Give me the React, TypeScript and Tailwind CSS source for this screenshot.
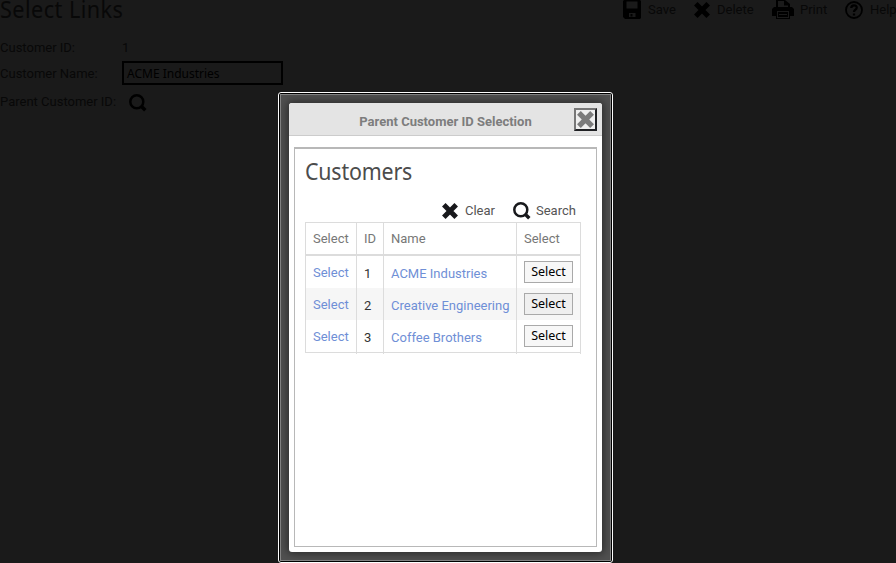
import type { ReactNode } from 'react';

function CrossIcon({ className }: { className: string }) {
  return (
    <svg viewBox="0 0 16 16" className={className} fill="none" stroke="currentColor" strokeWidth="5">
      <path d="M1.8 1.8 14.2 14.2M14.2 1.8 1.8 14.2" />
    </svg>
  );
}

function SearchIcon({ className }: { className: string }) {
  return (
    <svg viewBox="0 0 18 18" className={className} fill="none" stroke="currentColor">
      <circle cx="7.8" cy="7.8" r="6.5" strokeWidth="2.5" />
      <path d="m12 12 4.3 4.3" strokeWidth="3.4" />
    </svg>
  );
}

function SaveIcon() {
  return (
    <svg viewBox="0 0 18 19" className="h-[19px] w-[18px] shrink-0">
      <path
        fill="currentColor"
        fillRule="evenodd"
        d="M0 1 1 0h16l1 1v17l-1 1H2l-2-2ZM3.5 1.5v7h11v-7ZM6 13v4h6.5v-4ZM7.500 14H9.500v2.500H7.500Z"
      />
    </svg>
  );
}

function PrintIcon() {
  return (
    <svg viewBox="0 0 22 19" className="h-[19px] w-[22px] shrink-0">
      <path fill="currentColor" d="M4 0h9l5 4v3h2l2 2v7h-4v3H4v-3H0V9l2-2h2Z" />
      <path fill="#1a1a1a" d="M6 1h6v4.500h4V7H6ZM5 11h12v1H5ZM5 12h1v5H5ZM16 12h1v5h-1ZM5 17h12v1H5ZM7 14h8v1H7Z" />
    </svg>
  );
}

function HelpIcon() {
  return (
    <svg viewBox="0 0 18 18" className="h-[18px] w-[18px] shrink-0" fill="none" stroke="currentColor">
      <circle cx="9" cy="9" r="8" strokeWidth="1.8" />
      <path d="M6.3 7c0-3.6 5.6-3.4 5.4-.3C11.6 8.7 9 8.7 9 11M9 12.5v2" strokeWidth="2.3" />
    </svg>
  );
}

function Cell({ children, className }: { children: ReactNode; className: string }) {
  return <div className={`border-r border-[#dcdcdc] pl-[7px] ${className}`}>{children}</div>;
}

const customers = ['ACME Industries', 'Creative Engineering', 'Coffee Brothers'];

function CustomerTable() {
  return (
    <div className="w-[276px] border border-r-0 border-[#dcdcdc] text-[13px]">
      <div className="grid h-[33px] grid-cols-[51px_27px_133px_64px] border-b-2 border-[#dcdcdc] leading-[31px] text-[#777]">
        <Cell className="">Select</Cell>
        <Cell className="">ID</Cell>
        <Cell className="">Name</Cell>
        <Cell className="">Select</Cell>
      </div>
      {customers.map((name, i) => (
        <div
          key={name}
          className="grid h-8 grid-cols-[51px_27px_133px_64px] leading-8 text-[#6f8fd6] even:bg-white odd:bg-[#f6f6f6]"
        >
          <Cell className="pt-px">Select</Cell>
          <Cell className="pt-[2px] text-[#333]">{i + 1}</Cell>
          <Cell className="pt-[2px] whitespace-nowrap">{name}</Cell>
          <Cell className="pt-[5px]">
            <button
              className={`block h-[22px] w-[49px] border border-[#a9a9a9] font-['Noto_Sans',sans-serif] text-[12.5px] leading-5 tracking-[-.05px] text-black ${i === 1 ? 'bg-[#efefef]' : 'bg-[#f7f7f7]'}`}
            >
              Select
            </button>
          </Cell>
        </div>
      ))}
    </div>
  );
}

export default function App() {
  return (
    <div className="relative h-[563px] w-[896px] overflow-hidden bg-[#1a1a1a] font-['Roboto',sans-serif] text-[13px] leading-4 text-[#080808]">
      <header className="flex h-10 justify-between">
        <h1 className="h-[18px] origin-left scale-x-[.94] font-['Noto_Sans',sans-serif] text-[23px] leading-[18px] tracking-[.5px] whitespace-nowrap">
          Select Links
        </h1>
        <div className="flex h-[19px] w-[273px] shrink-0 items-center whitespace-nowrap text-black">
          <SaveIcon />
          <span className="ml-[7px] w-[46px] shrink-0 text-[#080808]">Save</span>
          <CrossIcon className="h-4 w-4 shrink-0" />
          <span className="ml-[7px] w-[55px] shrink-0 text-[#080808]">Delete</span>
          <PrintIcon />
          <span className="ml-[6px] w-[45px] shrink-0 text-[#080808]">Print</span>
          <HelpIcon />
          <span className="ml-[7px] shrink-0 text-[#080808]">Help</span>
        </div>
      </header>
      <div className="flex">
        <span className="w-[122px]">Customer ID:</span>
        <span>1</span>
      </div>
      <div className="mt-[5px] flex h-6 items-center">
        <span className="w-[122px] pt-[2px]">Customer Name:</span>
        <span className="h-6 w-[161px] border-2 border-black pt-px pl-[3px] font-['Noto_Sans',sans-serif] text-[12px] leading-5 text-black">
          ACME Industries
        </span>
      </div>
      <div className="mt-2 flex h-[18px] items-center">
        <span className="w-[129px]">Parent Customer ID:</span>
        <SearchIcon className="mt-px h-[18px] w-[18px] text-black" />
      </div>

      <div className="absolute top-[92px] left-[278px] h-[471px] w-[335px] rounded-[3px] border border-white bg-black p-px">
        <div className="h-full border border-[#858585] bg-[#505050] px-[8px] pt-[8px] pb-[8px]">
          <section className="h-[449px] w-[313px] rounded-[3px] bg-white shadow-[0_0_8px_2px_rgba(0,0,0,0.45)]">
            <div className="flex h-[33px] items-center rounded-t-[3px] border-b border-[#ccc] bg-[#e4e4e4] pt-[4px]">
              <h2 className="w-[285px] pt-[2px] pl-[28px] text-center text-[13px] font-bold whitespace-nowrap text-[#7d7d7d]">
                Parent Customer ID Selection
              </h2>
              <button className="-mt-[4px] flex h-[23px] w-[23px] items-center justify-center border-2 border-t-[#777] border-r-[#202124] border-b-[#202124] border-l-[#777] bg-[#efefef] text-[#7b7b7b]">
                <CrossIcon className="h-[17px] w-[17px]" />
              </button>
            </div>
            <div className="mt-[11px] ml-[5px] h-[400px] w-[303px] border border-t-2 border-[#b8b8b8] pl-[10px]">
              <h3 className="h-[52px] origin-left scale-x-[.93] pt-[6px] font-['Noto_Sans',sans-serif] text-[23px] leading-8 tracking-[-.2px] text-[#4c4c4c]">
                Customers
              </h3>
              <div className="mb-px flex h-5 items-center pl-[137px] text-[#555]">
                <CrossIcon className="h-4 w-4 text-[#18191c]" />
                <span className="ml-[7px] w-[48px]">Clear</span>
                <SearchIcon className="h-[18px] w-[18px] text-[#18191c]" />
                <span className="ml-[5px]">Search</span>
              </div>
              <CustomerTable />
            </div>
          </section>
        </div>
      </div>
    </div>
  );
}
